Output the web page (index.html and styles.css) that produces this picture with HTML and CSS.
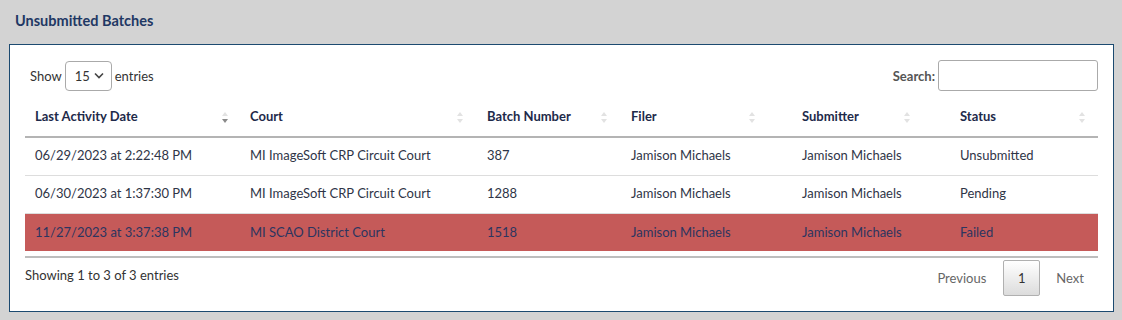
FILE: index.html
```html
<!DOCTYPE html>
<html lang="en">
<head>
<meta charset="utf-8">
<title>Unsubmitted Batches</title>
<link rel="stylesheet" href="styles.css">
</head>
<body>
  <h2 class="section-title">Unsubmitted Batches</h2>
  <section class="panel">
    <div class="dt-controls">
      <label class="dt-length">Show
        <span class="select">15
          <svg class="chev" width="10" height="7" viewBox="0 0 10 7"><path d="M1 1.5 L5 5.5 L9 1.5" fill="none" stroke="#444" stroke-width="1.6"/></svg>
        </span>
        entries</label>
      <label class="dt-search">Search:<span class="search-input"></span></label>
    </div>

    <table class="dt-table">
      <colgroup>
        <col class="c1"><col class="c2"><col class="c3"><col class="c4"><col class="c5"><col class="c6">
      </colgroup>
      <thead>
        <tr>
          <th class="sorted a1">Last Activity Date<span class="sort"><i class="up"></i><i class="down"></i></span></th>
          <th class="a2">Court<span class="sort"><i class="up"></i><i class="down"></i></span></th>
          <th class="a3">Batch Number<span class="sort"><i class="up"></i><i class="down"></i></span></th>
          <th class="a4">Filer<span class="sort"><i class="up"></i><i class="down"></i></span></th>
          <th class="a5">Submitter<span class="sort"><i class="up"></i><i class="down"></i></span></th>
          <th class="a6">Status<span class="sort"><i class="up"></i><i class="down"></i></span></th>
        </tr>
      </thead>
      <tbody>
        <tr>
          <td>06/29/2023 at 2:22:48 PM</td>
          <td>MI ImageSoft CRP Circuit Court</td>
          <td>387</td>
          <td>Jamison Michaels</td>
          <td>Jamison Michaels</td>
          <td>Unsubmitted</td>
        </tr>
        <tr>
          <td>06/30/2023 at 1:37:30 PM</td>
          <td>MI ImageSoft CRP Circuit Court</td>
          <td>1288</td>
          <td>Jamison Michaels</td>
          <td>Jamison Michaels</td>
          <td>Pending</td>
        </tr>
        <tr class="failed">
          <td>11/27/2023 at 3:37:38 PM</td>
          <td>MI SCAO District Court</td>
          <td>1518</td>
          <td>Jamison Michaels</td>
          <td>Jamison Michaels</td>
          <td>Failed</td>
        </tr>
      </tbody>
    </table>

    <div class="dt-footer">
      <div class="dt-info">Showing 1 to 3 of 3 entries</div>
      <nav class="dt-paging">
        <span class="page-link disabled">Previous</span>
        <span class="page-btn current">1</span>
        <span class="page-link disabled">Next</span>
      </nav>
    </div>
  </section>
</body>
</html>
```

FILE: styles.css
```css
* { box-sizing: border-box; }

body {
  margin: 0;
  background: #d3d3d3;
  font-family: "Lato", "Liberation Sans", sans-serif;
  font-size: 13px;
  color: #333;
}

.section-title {
  margin: 0;
  height: 44px;
  padding: 13px 0 0 15px;
  font-size: 14.5px;
  font-weight: 700;
  color: #1f3864;
  line-height: 16px;
}

.panel {
  width: 1105px;
  margin-left: 9px;
  background: #fff;
  border: 1px solid #1c4a70;
  padding: 15px;
}

.dt-controls {
  display: flex;
  justify-content: space-between;
  align-items: center;
  height: 31px;
  color: #333;
}

.dt-length {
  display: flex;
  align-items: center;
  gap: 3px;
  padding-left: 5px;
}

.select {
  display: inline-flex;
  align-items: center;
  justify-content: space-between;
  width: 47px;
  height: 30px;
  border: 1px solid #aaa;
  border-radius: 4px;
  padding: 0 7px 0 9px;
  color: #333;
}

.dt-search {
  display: flex;
  align-items: center;
  gap: 3px;
  font-weight: 700;
  color: #555;
}

.search-input {
  display: block;
  width: 160px;
  height: 31px;
  border: 1px solid #aaa;
  border-radius: 3px;
}

.dt-table {
  width: 1073px;
  margin-top: 9px;
  border-collapse: collapse;
  table-layout: fixed;
  color: #2f3547;
}

.c1 { width: 215px; }
.c2 { width: 237px; }
.c3 { width: 144px; }
.c4 { width: 171px; }
.c5 { width: 158px; }
.c6 { width: 148px; }

.dt-table th {
  position: relative;
  height: 37px;
  padding: 0 10px 4px;
  text-align: left;
  font-weight: 700;
  color: #1e2a4a;
  border-bottom: 2px solid #b4b4b4;
}

.sort {
  position: absolute;
  top: 12px;
  display: flex;
  flex-direction: column;
  gap: 3px;
}
.sort i {
  display: block;
  width: 0;
  height: 0;
  border-left: 3px solid transparent;
  border-right: 3px solid transparent;
}
.sort .up { border-bottom: 4px solid #e2e2e2; }
.sort .down { border-top: 4px solid #e2e2e2; }
.sorted .sort .down { border-top-color: #8a8a8a; }

.a1 .sort { right: 12px; }
.a2 .sort { right: 14px; }
.a3 .sort { right: 14px; }
.a4 .sort { right: 37px; }
.a5 .sort { right: 40px; }
.a6 .sort { right: 13px; }

.dt-table td {
  height: 38px;
  padding: 0 10px 2px;
  border-top: 1px solid #ddd;
  white-space: nowrap;
}
.dt-table tbody tr:first-child td { border-top: none; }

.dt-table tr.failed td {
  background: #c55a59;
  color: #2c3560;
  padding-bottom: 0;
}

.dt-footer {
  display: flex;
  justify-content: space-between;
  align-items: center;
  margin-top: 5px;
  border-top: 2px solid #bdbdbd;
  padding-top: 2px;
}

.dt-info {
  padding-bottom: 6px;
  color: #333;
}

.dt-paging {
  display: flex;
  align-items: center;
}

.page-link {
  padding: 0 14px;
  color: #666;
}

.page-btn {
  display: flex;
  align-items: center;
  justify-content: center;
  width: 37px;
  height: 36px;
  margin: 0 2px 0 3px;
  border: 1px solid #b0b0b0;
  border-radius: 2px;
  background: linear-gradient(#fff, #dcdcdc);
  color: #333;
}
```
